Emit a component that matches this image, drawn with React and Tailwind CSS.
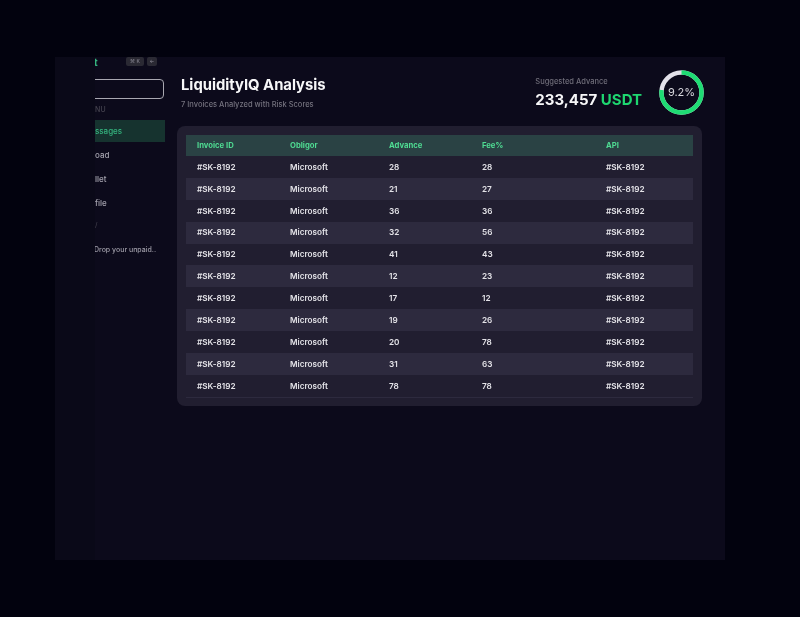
const rows = [
  [28, 28], [21, 27], [36, 36], [32, 56], [41, 43], [12, 23],
  [17, 12], [19, 26], [20, 78], [31, 63], [78, 78],
];

const cols = "grid grid-cols-[93px_99px_93px_124px_1fr] pl-[11px] items-center";

function Nav({ label, active }) {
  return (
    <div className={`h-[22px] w-[70px] overflow-hidden flex items-center text-[8px] font-medium whitespace-nowrap ${active ? "bg-[#16332f] text-[#35b57f]" : "text-[#a5a3ae]"}`}>
      <span>{label}</span>
    </div>
  );
}

export default function App() {
  return (
    <div className="w-[800px] h-[617px] bg-[#02020e] pt-[57px] pl-[55px] overflow-hidden font-['Inter',sans-serif] blur-[0.5px]">
      <div className="w-[670px] h-[503px] bg-[#0c0a1b] flex">
        {/* clipped left rail */}
        <div className="w-[40px] shrink-0 bg-[#0a0918]" />

        {/* sidebar, cut off on its left side */}
        <div className="w-[70px] shrink-0 overflow-hidden flex flex-col">
          <div className="h-[9px] flex items-center justify-between pr-[8px]">
            <span className="text-[#35b57f] text-[10px] font-bold leading-none mt-[1px] ml-[-1px]">t</span>
            <div className="flex gap-[3px]">
              <span className="w-[18px] h-[9px] rounded-[2px] bg-[#2a2933] text-[#8f8d99] text-[5px] leading-[9px] text-center">⌘ K</span>
              <span className="w-[10px] h-[9px] rounded-[2px] bg-[#2a2933] text-[#8f8d99] text-[5px] leading-[9px] text-center">←</span>
            </div>
          </div>
          <div className="h-[20px] w-[74px] mt-[13px] ml-[-5px] border border-[#a9a8b1] rounded-[4px]" />
          <div className="mt-[6px] h-[10px] text-[7px] tracking-wide text-[#45434f] leading-[10px] font-medium">NU</div>
          <div className="mt-[5px] flex flex-col gap-[2px]">
            <Nav label="ssages" active />
            <Nav label="oad" />
            <Nav label="llet" />
            <Nav label="file" />
          </div>
          <div className="mt-[6px] h-[10px] text-[7px] text-[#45434f] leading-[10px]">/</div>
          <div className="mt-[15px] text-[7px] leading-[10px] text-[#a09ea9] whitespace-nowrap font-medium ml-[-1px]">Drop your unpaid..</div>
        </div>

        {/* main */}
        <div className="flex-1 pl-[12px] flex flex-col">
          <div className="h-[69px] w-[525px] flex items-start justify-between pl-[4px] pt-[14px]">
            <div className="pt-[5px]">
              <h1 className="text-[14.8px] leading-[19px] font-bold text-[#f7f7f8]">LiquidityIQ Analysis</h1>
              <p className="mt-[5px] text-[7.5px] leading-[10px] font-medium text-[#74727e]">7 Invoices Analyzed with Risk Scores</p>
            </div>
            <div className="flex items-start mr-[-2px]">
              <div className="pt-[6px]">
                <div className="text-[7.5px] leading-[10px] font-medium text-[#6f6d79]">Suggested Advance</div>
                <div className="mt-[3px] text-[15px] leading-[20px] font-bold text-[#f7f7f8] whitespace-nowrap">
                  233,457 <span className="text-[#1ed670]">USDT</span>
                </div>
              </div>
              <div className="relative w-[45px] h-[45px] ml-[17px] mt-[-1px]">
                <svg viewBox="0 0 46 46" className="w-[45px] h-[45px] -rotate-90">
                  <circle cx="23" cy="23" r="20.5" fill="none" stroke="#e3e1ea" strokeWidth="4.5" />
                  <circle cx="23" cy="23" r="20.5" fill="none" stroke="#1fdc74" strokeWidth="4.5" strokeDasharray="98.6 128.8" />
                </svg>
                <span className="absolute inset-0 flex items-center justify-center text-[11px] text-[#d9d8de]">9.2%</span>
              </div>
            </div>
          </div>

          <div className="w-[525px] h-[280px] rounded-[8px] bg-[#211e30] pt-[9px] px-[9px]">
            <div className={`${cols} h-[21px] bg-[#2a4244] text-[7.7px] font-bold text-[#4fdc93]`}>
              <span>Invoice ID</span><span>Obligor</span><span>Advance</span><span>Fee%</span><span>API</span>
            </div>
            {rows.map(([a, f], i) => (
              <div key={i} className={`${cols} h-[21.9px] text-[8.2px] font-semibold text-[#e4e3e8] ${i % 2 ? "bg-[#2d2a3e]" : ""}`}>
                <span>#SK-8192</span><span>Microsoft</span><span>{a}</span><span>{f}</span><span>#SK-8192</span>
              </div>
            ))}
            <div className="h-px bg-[#2d2a3e]" />
          </div>
        </div>
      </div>
    </div>
  );
}
